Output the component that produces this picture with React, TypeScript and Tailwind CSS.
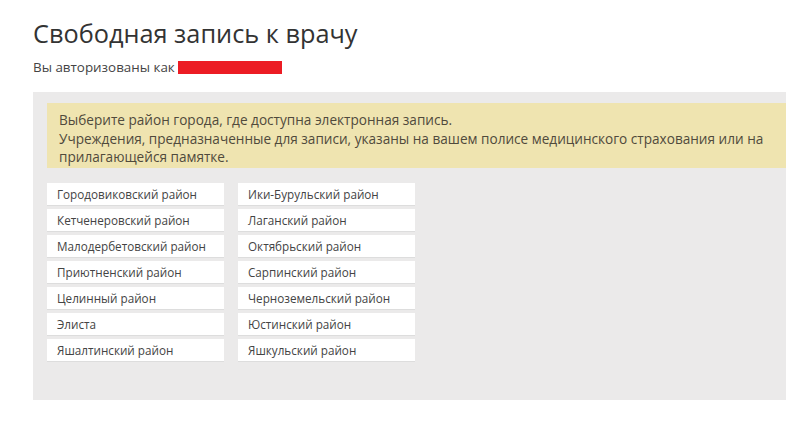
import React from "react";

const left = [
  "Городовиковский район",
  "Кетченеровский район",
  "Малодербетовский район",
  "Приютненский район",
  "Целинный район",
  "Элиста",
  "Яшалтинский район",
];
const right = [
  "Ики-Бурульский район",
  "Лаганский район",
  "Октябрьский район",
  "Сарпинский район",
  "Черноземельский район",
  "Юстинский район",
  "Яшкульский район",
];

export default function App() {
  const items: string[] = [];
  left.forEach((l, i) => {
    items.push(l);
    items.push(right[i]);
  });
  return (
    <div
      className="w-[812px] h-[426px] bg-white overflow-hidden"
      style={{ fontFamily: '"Open Sans", "DejaVu Sans", sans-serif' }}
    >
      <div className="pl-[33px] pt-[15px]">
        <h1 className="text-[25.3px] leading-[36px] text-[#333333] font-normal">
          Свободная запись к врачу
        </h1>
        <div className="mt-[7px] flex items-center text-[13.4px] leading-[18px] text-[#444444]">
          <span>Вы авторизованы как</span>
          <span className="ml-[3px] inline-block w-[104px] h-[13px] bg-[#ec1c24]" />
        </div>
      </div>
      <div className="ml-[33px] mt-[16px] w-[753px] h-[308px] bg-[#ebeaea] pt-[11px] pl-[14px]">
        <div className="h-[65px] bg-[#efe4b0] pl-[12px] pt-[8px] text-[13.6px] leading-[18.5px] text-[#504a3c]">
          <div>Выберите район города, где доступна электронная запись.</div>
          <div>
            Учреждения, предназначенные для записи, указаны на вашем полисе медицинского страхования или на
            <br />
            прилагающейся памятке.
          </div>
        </div>
        <div className="mt-[15px] grid grid-cols-[177px_177px] gap-x-[14px] gap-y-[3px]">
          {items.map((t) => (
            <div
              key={t}
              className="h-[23px] bg-white border-b border-[#dddddd] pl-[10px] text-[11.7px] leading-[22px] text-[#444444]"
            >
              {t}
            </div>
          ))}
        </div>
      </div>
    </div>
  );
}
